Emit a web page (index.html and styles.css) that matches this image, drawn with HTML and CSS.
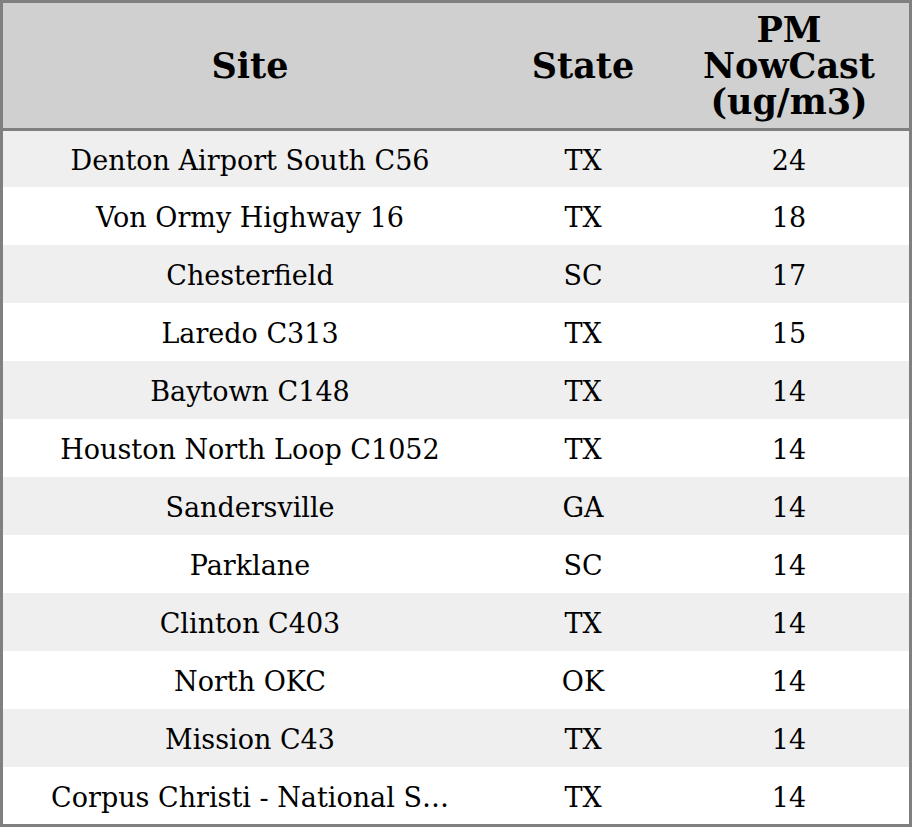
FILE: index.html
```html
<!DOCTYPE html>
<html>
<head>
<meta charset="utf-8">
<link rel="stylesheet" href="styles.css">
</head>
<body>
<div class="frame">
  <table class="grid">
    <colgroup>
      <col class="c-site"><col class="c-state"><col class="c-pm">
    </colgroup>
    <thead>
      <tr><th>Site</th><th>State</th><th>PM<br>NowCast<br>(ug/m3)</th></tr>
    </thead>
    <tbody>
      <tr class="first"><td>Denton Airport South C56</td><td>TX</td><td>24</td></tr>
      <tr><td>Von Ormy Highway 16</td><td>TX</td><td>18</td></tr>
      <tr><td>Chesterfield</td><td>SC</td><td>17</td></tr>
      <tr><td>Laredo C313</td><td>TX</td><td>15</td></tr>
      <tr><td>Baytown C148</td><td>TX</td><td>14</td></tr>
      <tr><td>Houston North Loop C1052</td><td>TX</td><td>14</td></tr>
      <tr><td>Sandersville</td><td>GA</td><td>14</td></tr>
      <tr><td>Parklane</td><td>SC</td><td>14</td></tr>
      <tr><td>Clinton C403</td><td>TX</td><td>14</td></tr>
      <tr><td>North OKC</td><td>OK</td><td>14</td></tr>
      <tr><td>Mission C43</td><td>TX</td><td>14</td></tr>
      <tr class="last"><td>Corpus Christi - National S…</td><td>TX</td><td>14</td></tr>
    </tbody>
  </table>
</div>
</body>
</html>
```

FILE: styles.css
```css
html, body {
  margin: 0;
  padding: 0;
  background: #ffffff;
}
.frame {
  width: 906px;
  height: 821px;
  border: 3px solid #808080;
  overflow: hidden;
}
.grid {
  width: 906px;
  border-collapse: collapse;
  table-layout: fixed;
  font-family: "DejaVu Serif", serif;
  color: #000;
}
.c-site { width: 494px; }
.c-state { width: 172px; }
.c-pm { width: 240px; }
thead th {
  background: #d0d0d0;
  height: 125px;
  padding: 0;
  font-size: 35px;
  line-height: 36px;
  font-weight: bold;
  text-align: center;
  vertical-align: middle;
  border-bottom: 3px solid #808080;
}
tbody td {
  height: 54px;
  padding: 4px 0 0;
  font-size: 27px;
  line-height: 32px;
  text-align: center;
  vertical-align: middle;
  white-space: nowrap;
}
tbody tr:nth-child(odd) td { background: #efefef; }
tbody tr:nth-child(even) td { background: #ffffff; }
tbody tr.first td { height: 52px; }
tbody tr.last td { height: 53px; }
```
